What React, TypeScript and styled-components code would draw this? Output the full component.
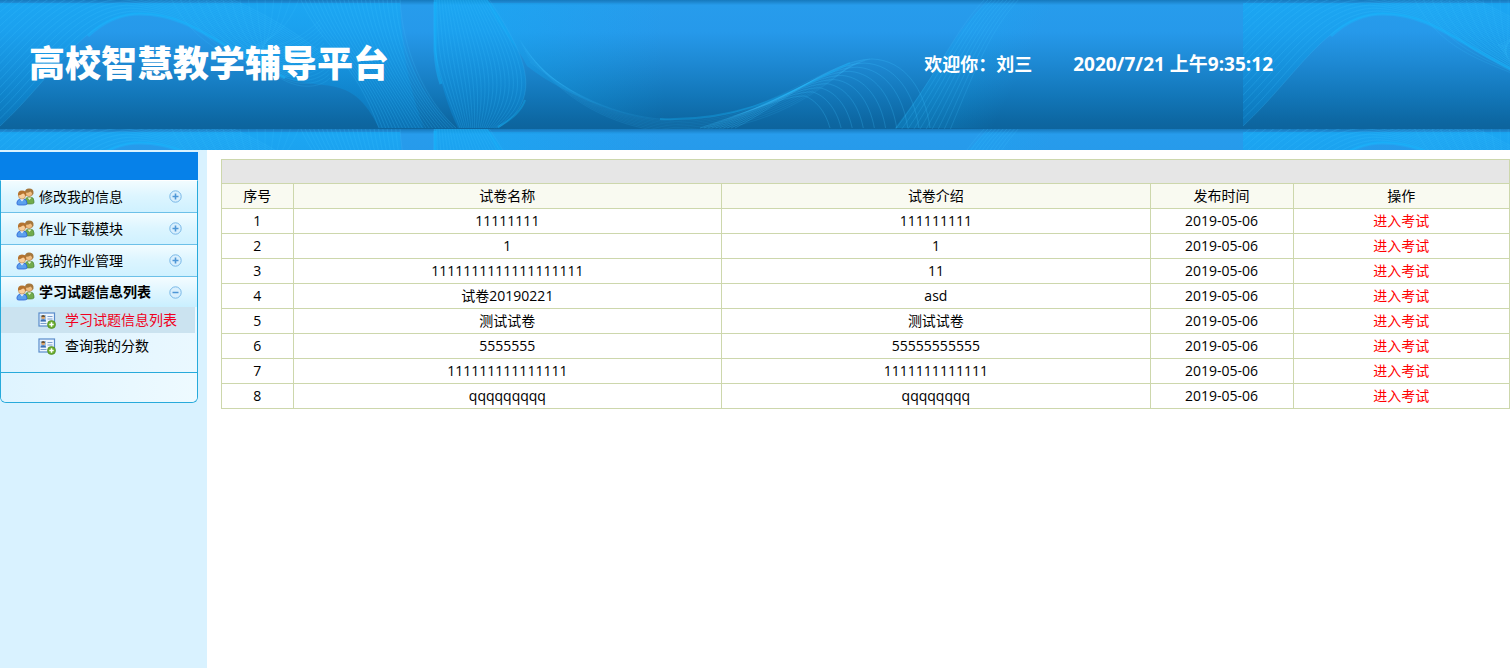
import React from 'react';
import styled, { createGlobalStyle } from 'styled-components';

const GlobalStyle = createGlobalStyle`
  * { box-sizing: border-box; }
  body {
    margin: 0;
    background: #fff;
    color: #000;
    font: 14px/20px "Open Sans", "Noto Sans CJK SC", sans-serif;
  }
  #root { min-height: 100vh; display: flex; flex-direction: column; }
`;

const Header = styled.header`
  display: grid;
  height: 150px;
  overflow: hidden;
`;

const Backdrop = styled.svg`
  grid-area: 1 / 1;
  display: block;
  width: 100%;
  height: 150px;
`;

const HeaderRow = styled.div`
  grid-area: 1 / 1;
  z-index: 1;
  display: flex;
  align-items: center;
  justify-content: space-between;
  height: 128px;
  padding: 0 237px 0 29px;
  color: #fff;
  font-weight: 700;
  white-space: nowrap;
`;

const Title = styled.h1`
  margin: 0;
  font-size: 36px;
  font-weight: 900;
  line-height: 48px;
`;

const Session = styled.div`
  display: flex;
  gap: 41px;
  font-size: 18px;
  line-height: 24px;
`;

const Clock = styled.time`
  font-size: 19px;
`;

const Body = styled.div`
  display: flex;
  flex: 1;
`;

const Sidebar = styled.aside`
  flex: none;
  width: 207px;
  padding: 2px 9px 0 0;
  background: #d9f2ff;
`;

const SidebarCap = styled.div`
  height: 28px;
  background: #0681e9;
`;

const Menu = styled.nav`
  border: 1px solid #27aadb;
  border-top-color: #fff;
  border-radius: 0 0 6px 6px;
  overflow: hidden;
`;

const Group = styled.button<{ $open?: boolean }>`
  display: flex;
  align-items: center;
  gap: 4px;
  width: 100%;
  height: ${(p) => (p.$open ? 30 : 32)}px;
  padding: 0 15px;
  border: 0;
  border-bottom: ${(p) => (p.$open ? 0 : 1)}px solid #6cc0e8;
  background: ${(p) =>
    p.$open
      ? 'linear-gradient(#f4fcff, #c9efff)'
      : 'linear-gradient(#f2fcff, #dcf5ff 50%, #cff1ff)'};
  color: #000;
  font: inherit;
  font-weight: ${(p) => (p.$open ? 700 : 400)};
  text-align: left;
  cursor: pointer;
`;

const GroupLabel = styled.span`
  flex: 1;
  white-space: nowrap;
`;

const SubMenu = styled.div`
  padding-bottom: 13px;
  background: linear-gradient(90deg, #dcf3ff, #eaf8ff);
`;

const SubLink = styled.a<{ $active?: boolean }>`
  display: flex;
  align-items: center;
  gap: 9px;
  height: 26px;
  margin-right: 2px;
  padding-left: 37px;
  background: ${(p) => (p.$active ? '#cbe3f0' : 'transparent')};
  color: ${(p) => (p.$active ? '#f00020' : '#000')};
  text-decoration: none;
  white-space: nowrap;
`;

const MenuFoot = styled.div`
  height: 30px;
  border-top: 1px solid #27aadb;
  background: linear-gradient(90deg, #dff4ff, #eefaff);
`;

const Main = styled.main`
  flex: 1;
  min-width: 0;
  padding: 9px 0 0 14px;
`;

const Table = styled.table`
  width: 100%;
  table-layout: fixed;
  border-collapse: collapse;
  border: 1px solid #cdd7ac;
`;

const Col = styled.col<{ $share: string }>`
  width: ${(p) => p.$share};
`;

const Spacer = styled.td`
  height: 24px;
  padding: 0;
  border: 1px solid #cdd7ac;
  background: #e6e6e6;
`;

const HeadCell = styled.th`
  height: 25px;
  padding: 0;
  border: 1px solid #cdd7ac;
  background: #f9faf1;
  font-weight: 400;
  text-align: center;
`;

const Cell = styled.td`
  height: 25px;
  padding: 0;
  border: 1px solid #cdd7ac;
  text-align: center;
`;

const ExamLink = styled.a`
  color: #f00;
  text-decoration: none;
`;

type Point = [number, number];

/* Blend between two cubic curves and return the strands in between. */
function strands(from: Point[], to: Point[], count: number): string[] {
  return Array.from({ length: count }, (_, i) => {
    const t = i / (count - 1);
    const p = from.map(([x, y], k) => [
      Math.round((x + (to[k][0] - x) * t) * 10) / 10,
      Math.round((y + (to[k][1] - y) * t) * 10) / 10,
    ]);
    let d = `M${p[0].join(',')}`;
    for (let k = 1; k + 2 < p.length; k += 3) {
      d += `C${p[k].join(',')} ${p[k + 1].join(',')} ${p[k + 2].join(',')}`;
    }
    return d;
  });
}

const waves = [
  {
    opacity: 0.22,
    lines: strands(
      [[0, 126], [55, 75], [85, 14], [140, 14], [190, 14], [215, 45], [285, 78]],
      [[-130, 60], [-70, 10], [-40, -30], [30, -60], [170, -30], [260, 0], [330, 60]],
      26,
    ),
  },
  {
    opacity: 0.16,
    lines: strands(
      [[170, -4], [195, 50], [240, 60], [280, 78], [300, 90], [320, 88], [330, 78]],
      [[300, -4], [290, 25], [275, 38], [255, 45], [275, 50], [300, 40], [320, 20]],
      16,
    ),
  },
  {
    opacity: 0.22,
    lines: strands(
      [[300, -2], [320, 45], [355, 60], [379, 128]],
      [[400, -2], [402, 50], [425, 100], [456, 128]],
      24,
    ),
  },
  {
    opacity: 0.2,
    lines: strands(
      [[434, -2], [434, 60], [434, 60], [460, 128]],
      [[488, -2], [530, 60], [542, 100], [498, 128]],
      22,
    ),
  },
  {
    opacity: 0.12,
    lines: strands(
      [[530, 62], [590, 110], [640, 120], [680, 120], [770, 118], [810, 68], [870, 59]],
      [[520, 40], [560, 105], [620, 128], [670, 132], [740, 134], [800, 110], [850, 65]],
      9,
    ),
  },
  {
    opacity: 0.24,
    lines: strands(
      [[735, 128], [780, 105], [830, 60], [872, 59], [905, 60], [925, 90], [930, 128]],
      [[700, 128], [740, 115], [785, 95], [805, 96], [815, 100], [825, 110], [830, 128]],
      10,
    ),
  },
  {
    opacity: 0.2,
    lines: strands(
      [[895, 130], [940, 70], [955, 30], [986, -2]],
      [[950, 130], [975, 70], [990, 30], [1020, -2]],
      10,
    ),
  },
];

function HeaderBackdrop() {
  return (
    <Backdrop aria-hidden="true">
      <defs>
        <linearGradient id="sky" x1="0" y1="0" x2="0" y2="1">
          <stop offset="0" stopColor="#1679bd" />
          <stop offset="0.04" stopColor="#279cec" />
          <stop offset="0.25" stopColor="#2699ea" />
          <stop offset="0.5" stopColor="#1d88d2" />
          <stop offset="0.75" stopColor="#1276b8" />
          <stop offset="0.94" stopColor="#0d67a2" />
          <stop offset="1" stopColor="#0d649d" />
        </linearGradient>
        <linearGradient id="fadeDown" x1="0" y1="0" x2="0" y2="1">
          <stop offset="0" stopColor="#12aff8" stopOpacity="0.55" />
          <stop offset="1" stopColor="#0a8ddd" stopOpacity="0.35" />
        </linearGradient>
        <linearGradient id="fadeRight" x1="0" y1="0" x2="1" y2="0">
          <stop offset="0" stopColor="#12aff8" stopOpacity="0.4" />
          <stop offset="1" stopColor="#12aff8" stopOpacity="0" />
        </linearGradient>
        <linearGradient id="beam" gradientUnits="userSpaceOnUse" x1="940" y1="60" x2="1010" y2="95">
          <stop offset="0" stopColor="#12aff8" stopOpacity="0.25" />
          <stop offset="1" stopColor="#12aff8" stopOpacity="0" />
        </linearGradient>
        <pattern id="tile" width="1243" height="129" patternUnits="userSpaceOnUse">
          <rect width="1243" height="129" fill="url(#sky)" />
          <path
            fill="url(#fadeDown)"
            d="M0,3V126C55,75 85,14 140,14C190,14 215,45 285,78C325,92 352,72 379,128H424C412,95 402,60 400,3Z"
          />
          <path fill="url(#fadeDown)" opacity="0.4" d="M400,3C402,60 425,100 456,128H424C412,95 402,60 400,3Z" />
          <path fill="url(#fadeDown)" d="M434,0V50Q444,100 458,128H498C542,100 530,60 488,0Z" />
          <path fill="url(#fadeRight)" d="M488,3C500,30 520,50 527,66C570,100 640,122 665,120V3Z" />
          <path fill="url(#beam)" d="M986,3C955,30 940,70 895,128H1100V3Z" />
          {waves.map((wave, w) => (
            <g key={w} fill="none" stroke="#35c0ff" strokeOpacity={wave.opacity}>
              {wave.lines.map((d, i) => (
                <path key={i} d={d} />
              ))}
            </g>
          ))}
          <g fill="none" stroke="#12b9ff">
            <path strokeWidth="3" strokeOpacity="0.4" d="M88,36C105,20 122,14 140,14C190,14 215,45 285,78" />
            <path strokeWidth="3" strokeOpacity="0.4" d="M435,2V50Q436,70 441,84" />
            <path strokeWidth="2" strokeOpacity="0.3" d="M660,119C750,122 800,86 850,63" />
            <path strokeWidth="2" strokeOpacity="0.35" d="M498,127Q520,115 525,100" />
          </g>
        </pattern>
      </defs>
      <rect width="100%" height="150" fill="url(#tile)" />
    </Backdrop>
  );
}

function UsersIcon() {
  return (
    <svg width="19" height="18" viewBox="0 0 19 18" aria-hidden="true">
      <path d="M9 16v-4q1-3 4-3h1q4 0 4 4v2q-1 1-3 1z" fill="#71ab4b" stroke="#477d38" strokeWidth=".6" />
      <path d="m11.500 9.500 2 2.500 2-2.500z" fill="#e8f4d8" />
      <circle cx="13" cy="5" r="3.600" fill="#f0bd80" stroke="#94602f" strokeWidth=".5" />
      <path d="M9 4.500q0-4 4-4 5 0 4.500 5l-1 2q0-3-2-4-3 2-5.500 1z" fill="#a5773c" />
      <path d="M1 16v-2q1-3 4-3h2q4 0 4 4v1q-1 1-3 1H3q-2 0-2-1z" fill="#5ba0ed" stroke="#2b62d6" strokeWidth=".8" />
      <path d="m4 11 2 2.500 2-2.500z" fill="#eef7ff" />
      <circle cx="6" cy="7.500" r="3.600" fill="#f9cf9c" stroke="#a66c38" strokeWidth=".5" />
      <path d="M2 7.500q-.500-5 4-5 5 0 4 5l-1 1q0-3-2-3-3 2-5 2z" fill="#b5732e" />
    </svg>
  );
}

function ToggleIcon({ open }: { open?: boolean }) {
  return (
    <svg width="13" height="13" viewBox="0 0 13 13" aria-hidden="true">
      <circle cx="6.500" cy="6.500" r="5.700" fill="#d8effd" stroke="#78b7e6" />
      <path d={open ? 'M3.500 6.500h6' : 'M3.500 6.500h6M6.500 3.500v6'} stroke="#4e96d6" strokeWidth="1.600" />
    </svg>
  );
}

function CardIcon() {
  return (
    <svg width="18" height="17" viewBox="0 0 18 17" aria-hidden="true">
      <rect x="1" y="1" width="15.500" height="13" fill="#edf6ff" stroke="#5a8ccb" strokeWidth="1.200" />
      <rect x="2.500" y="3" width="5.500" height="6.500" fill="#9fc5ea" />
      <circle cx="5.200" cy="5.500" r="1.800" fill="#dda46a" />
      <path d="M3.300 5q0-2 1.900-2t1.900 2z" fill="#69502f" />
      <path d="M2.500 9.500q0-2.300 2.700-2.300t2.800 2.300z" fill="#3d6fb3" />
      <path d="M9.500 4.500h5M9.500 7h5M2.500 11.500h6" stroke="#7c9fcb" />
      <circle cx="13.500" cy="12.500" r="4" fill="#6cae2f" stroke="#4d8a25" strokeWidth=".7" />
      <path d="M11.300 12.500h4.400M13.500 10.300v4.400" stroke="#fff" strokeWidth="1.500" />
    </svg>
  );
}

const groups = ['修改我的信息', '作业下载模块', '我的作业管理'];
const columns = ['序号', '试卷名称', '试卷介绍', '发布时间', '操作'];
const shares = ['5.56%', '33.27%', '33.27%', '11.1%', '16.8%'];
const exams = [
  ['11111111', '111111111'],
  ['1', '1'],
  ['1111111111111111111', '11'],
  ['试卷20190221', 'asd'],
  ['测试试卷', '测试试卷'],
  ['5555555', '55555555555'],
  ['111111111111111', '1111111111111'],
  ['qqqqqqqqq', 'qqqqqqqq'],
];

export default function App() {
  return (
    <>
      <GlobalStyle />
      <Header>
        <HeaderBackdrop />
        <HeaderRow>
          <Title>高校智慧教学辅导平台</Title>
          <Session>
            <span>欢迎你：刘三</span>
            <Clock>2020/7/21 上午9:35:12</Clock>
          </Session>
        </HeaderRow>
      </Header>
      <Body>
        <Sidebar>
          <SidebarCap />
          <Menu>
            {groups.map((name) => (
              <Group key={name} type="button" aria-expanded={false}>
                <UsersIcon />
                <GroupLabel>{name}</GroupLabel>
                <ToggleIcon />
              </Group>
            ))}
            <Group type="button" aria-expanded $open>
              <UsersIcon />
              <GroupLabel>学习试题信息列表</GroupLabel>
              <ToggleIcon open />
            </Group>
            <SubMenu>
              <SubLink href="#exams" $active>
                <CardIcon />
                学习试题信息列表
              </SubLink>
              <SubLink href="#scores">
                <CardIcon />
                查询我的分数
              </SubLink>
            </SubMenu>
            <MenuFoot />
          </Menu>
        </Sidebar>
        <Main>
          <Table>
            <colgroup>
              {shares.map((share, i) => (
                <Col key={i} $share={share} />
              ))}
            </colgroup>
            <thead>
              <tr>
                <Spacer colSpan={5} />
              </tr>
              <tr>
                {columns.map((name) => (
                  <HeadCell key={name} scope="col">{name}</HeadCell>
                ))}
              </tr>
            </thead>
            <tbody>
              {exams.map(([name, intro], i) => (
                <tr key={i}>
                  <Cell>{i + 1}</Cell>
                  <Cell>{name}</Cell>
                  <Cell>{intro}</Cell>
                  <Cell>2019-05-06</Cell>
                  <Cell>
                    <ExamLink href={`#exam-${i + 1}`}>进入考试</ExamLink>
                  </Cell>
                </tr>
              ))}
            </tbody>
          </Table>
        </Main>
      </Body>
    </>
  );
}
